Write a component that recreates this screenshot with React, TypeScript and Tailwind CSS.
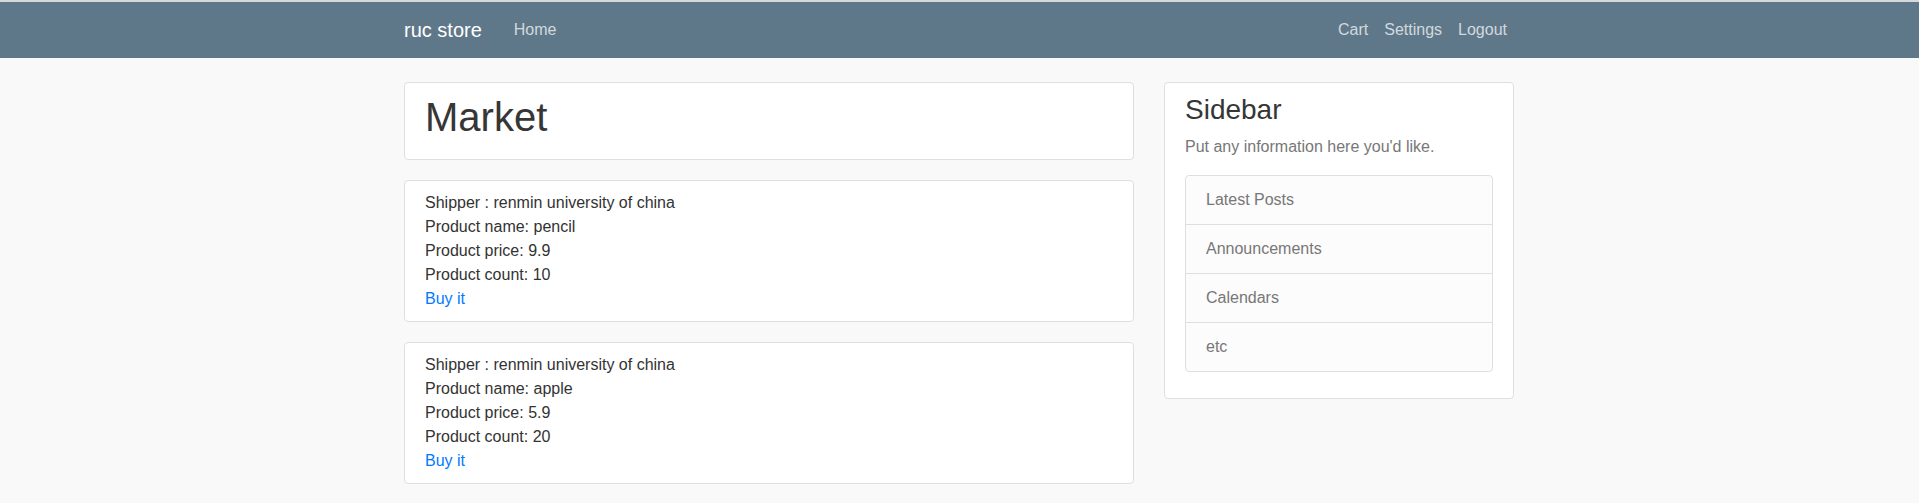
import React from "react";

const products = [
  { shipper: "renmin university of china", name: "pencil", price: "9.9", count: "10" },
  { shipper: "renmin university of china", name: "apple", price: "5.9", count: "20" },
];

const links = ["Latest Posts", "Announcements", "Calendars", "etc"];

export default function App() {
  return (
    <div
      className="min-h-screen bg-[#f9f9f9] text-[#333333]"
      style={{ fontFamily: '"Liberation Sans", Arial, Helvetica, sans-serif' }}
    >
      <nav className="border-t-2 border-[#d6d9dc] bg-[#5f7889]">
        <div className="mx-auto flex h-[56px] w-[1111px] items-center">
          <span className="mr-[24px] text-[20px] leading-[30px] text-white">ruc store</span>
          <span className="px-[8px] text-[16px] leading-[24px] text-[#d2d9de]">Home</span>
          <div className="ml-auto flex">
            <span className="px-[8px] text-[16px] leading-[24px] text-[#d2d9de]">Cart</span>
            <span className="px-[8px] text-[16px] leading-[24px] text-[#d2d9de]">Settings</span>
            <span className="px-[8px] text-[16px] leading-[24px] text-[#d2d9de]">Logout</span>
          </div>
        </div>
      </nav>

      <div className="mx-auto mt-6 flex w-[1111px] items-start gap-[30px]">
        <div className="w-[730px]">
          <div className="mb-5 rounded border border-[#dfdfdf] bg-white px-5 pb-[18px] pt-[10px]">
            <h1 className="text-[40px] leading-[48px] text-[#363636]">Market</h1>
          </div>
          {products.map((p, i) => (
            <div
              key={i}
              className="mb-5 rounded border border-[#dfdfdf] bg-white px-5 pb-[10px] pt-[10px] text-[16px] leading-[24px]"
            >
              <div>Shipper : {p.shipper}</div>
              <div>Product name: {p.name}</div>
              <div>Product price: {p.price}</div>
              <div>Product count: {p.count}</div>
              <a className="text-[#007bff]" href="#">
                Buy it
              </a>
            </div>
          ))}
        </div>

        <div className="w-[350px] rounded border border-[#dfdfdf] bg-white px-5 pb-[26px] pt-[10px]">
          <h3 className="mb-2 text-[28px] leading-[34px] text-[#363636]">Sidebar</h3>
          <p className="mb-4 text-[16px] leading-[24px] text-[#777777]">
            Put any information here you'd like.
          </p>
          <div className="divide-y divide-[#dfdfdf] rounded border border-[#dfdfdf] bg-[#fcfcfc]">
            {links.map((l) => (
              <div key={l} className="px-5 py-3 text-[16px] leading-[24px] text-[#777777]">
                {l}
              </div>
            ))}
          </div>
        </div>
      </div>
    </div>
  );
}
